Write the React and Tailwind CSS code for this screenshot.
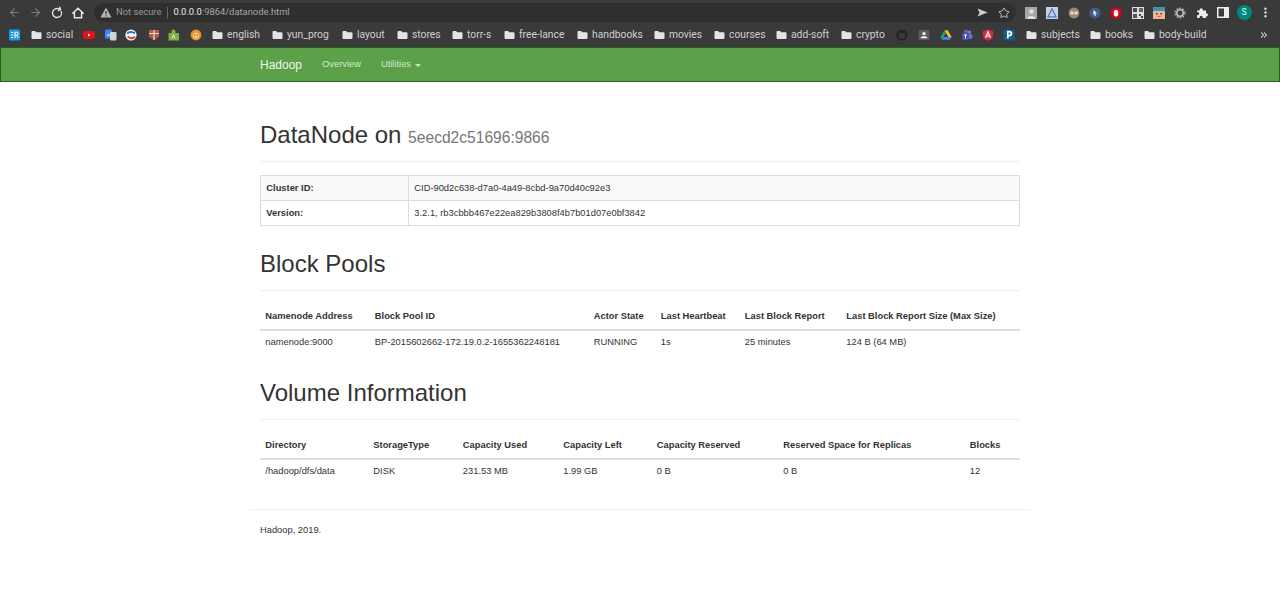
import React from "react";
import { ArrowLeft, ArrowRight, RotateCw, Star, EllipsisVertical, ChevronsRight } from "lucide-react";

const uiFont = "font-['Roboto','Noto_Sans',sans-serif]";

function Folder() {
  return (
    <svg width="11" height="10" viewBox="0 0 11 10" className="shrink-0">
      <path d="M0.5 2 a1 1 0 0 1 1-1 h2.6 l1.1 1.2 h4.3 a1 1 0 0 1 1 1 v4.8 a1 1 0 0 1-1 1 h-8 a1 1 0 0 1-1-1z" fill="#e4e4e4" />
    </svg>
  );
}

function Mark({ w = "w-[12px]", children }) {
  return (
    <svg viewBox="0 0 12 12" width="12" height="12" className={`shrink-0 ${w}`}>
      {children}
    </svg>
  );
}

function FolderLink({ label, className }) {
  return (
    <div className={`flex items-center gap-[4px] shrink-0 ${className}`}>
      <Folder />
      <span className="whitespace-nowrap">{label}</span>
    </div>
  );
}

function Bookmarks() {
  return (
    <div className={`h-[24px] bg-[#3a3a3a] flex items-center pl-[9px] text-[#cfcfcf] text-[10.3px] ${uiFont}`}>
      <Mark>
        <rect x="0" y="0.5" width="11" height="11" rx="1" fill="#1e9be8" />
        <path d="M2 3.5h2.4M2 6h2.4M2 8.5h2.4" stroke="#d7f0ff" strokeWidth="1" />
        <path d="M6 9V3.2h1.8a1.4 1.4 0 0 1 0 2.9H6m1.8 0L9.3 9" stroke="#fff" strokeWidth="1" fill="none" />
      </Mark>
      <FolderLink label="social" className="ml-[10px] w-[42px]" />
      <Mark w="ml-[10px]"><rect x="0" y="2" width="12" height="8" rx="2.4" fill="#e8101c" /><path d="M5 4.4v3.2L7.6 6z" fill="#fff" /></Mark>
      <Mark w="ml-[10px]"><rect x="0" y="0.5" width="7" height="9" rx="1" fill="#4285f4" /><rect x="5" y="3" width="6.5" height="8.5" rx="1" fill="#cfd4da" /><path d="M2 6h3" stroke="#fff" /></Mark>
      <Mark w="ml-[8px]"><circle cx="6" cy="6" r="5.6" fill="#f2f5f7" /><path d="M2 4.6 C4 2.4 8 2.6 10 4.4" stroke="#1e78c8" strokeWidth="1.8" fill="none" /><path d="M2.6 7.4 C5 9.6 8 9.6 10 7.6" stroke="#d9362b" strokeWidth="1.8" fill="none" /></Mark>
      <Mark w="ml-[11px]"><path d="M1 1h10v6.5L6 11.5 1 7.5z" fill="#b35a50" /><path d="M6 1v10M1 4.5h10" stroke="#ecd9c9" strokeWidth="1.2" /></Mark>
      <Mark w="ml-[8px]"><path d="M0.5 4h3V2.4a2 2 0 0 1 4 0V4h3.5v7.5H.5z" fill="#7cae4a" /><path d="M4 9.5 5.5 5.5 7 9.5" stroke="#e6f2d8" fill="none" /></Mark>
      <Mark w="ml-[10px]"><circle cx="6" cy="6" r="5.4" fill="#e98f2e" /><circle cx="6" cy="6.6" r="3.1" fill="#f4c77b" /><circle cx="4.8" cy="6" r="0.6" fill="#5a3312" /><circle cx="7.2" cy="6" r="0.6" fill="#5a3312" /></Mark>
      <FolderLink label="english" className="ml-[10px] w-[48px]" />
      <FolderLink label="yun_prog" className="ml-[12px] w-[58px]" />
      <FolderLink label="layout" className="ml-[12px] w-[44px]" />
      <FolderLink label="stores" className="ml-[11px] w-[44px]" />
      <FolderLink label="torr-s" className="ml-[11px] w-[41px]" />
      <FolderLink label="free-lance" className="ml-[11px] w-[61px]" />
      <FolderLink label="handbooks" className="ml-[12px] w-[66px]" />
      <FolderLink label="movies" className="ml-[11px] w-[48px]" />
      <FolderLink label="courses" className="ml-[12px] w-[50px]" />
      <FolderLink label="add-soft" className="ml-[12px] w-[54px]" />
      <FolderLink label="crypto" className="ml-[11px] w-[45px]" />
      <Mark w="ml-[10px]"><circle cx="6" cy="6" r="5.6" fill="#242424" /><path d="M3.2 9.4V6.8C2.6 5 3.2 3.6 3.8 3.4L5 4.2h2l1.2-.8c.6.2 1.2 1.6.6 3.4v2.6" fill="#3a3a3a" /></Mark>
      <Mark w="ml-[10px]"><rect x="0.5" y="1" width="11" height="10" rx="1" fill="#5b5b5b" /><circle cx="6" cy="4.6" r="1.7" fill="#f2f2f2" /><path d="M2.8 9.2h6.4V8L6 6.9 2.8 8z" fill="#f2f2f2" /></Mark>
      <Mark w="ml-[10px]"><path d="M4.4 1.2h3.2l4 6.8H8.4z" fill="#f6bf26" /><path d="M4.4 1.2.4 8l1.6 2.8L6 4z" fill="#1ea362" /><path d="M2 10.8h8L11.6 8H3.6z" fill="#4285f4" /></Mark>
      <Mark w="ml-[9px]"><circle cx="8.5" cy="3" r="1.6" fill="#7f86d8" /><rect x="6.5" y="4.8" width="5" height="5" rx="1.6" fill="#6a71c9" /><circle cx="5" cy="2.6" r="2" fill="#5b62c4" /><rect x="1" y="4" width="7" height="7" rx="1" fill="#4a50b0" /><path d="M3 6h3M4.5 6v3.4" stroke="#fff" /></Mark>
      <Mark w="ml-[9px]"><path d="M6 .4 11.4 2.4 10.5 9.4 6 11.8 1.5 9.4.6 2.4z" fill="#dd2c3f" /><path d="M3.6 8.8 6 2.8l2.4 6M4.4 7h3.2" stroke="#fff" strokeWidth="1.1" fill="none" /></Mark>
      <Mark w="ml-[9px]"><rect x="0.5" y="0.5" width="11" height="11" rx="1" fill="#0f5f8c" /><path d="M4.8 9.6V2.6h1.6a2 2 0 0 1 0 4H4.8" stroke="#fff" strokeWidth="1.7" fill="none" /></Mark>
      <FolderLink label="subjects" className="ml-[11px] w-[53px]" />
      <FolderLink label="books" className="ml-[11px] w-[43px]" />
      <FolderLink label="body-build" className="ml-[11px] w-[64px]" />
      <ChevronsRight size={10} strokeWidth={2.5} className="ml-[51px] text-[#d8d8d8]" />
    </div>
  );
}

function ExtSlot({ children }) {
  return <div className="w-[21.3px] h-[14px] flex items-center justify-center shrink-0">{children}</div>;
}

function Toolbar() {
  return (
    <div className="h-[23px] bg-[#3a3a3a] flex items-center pt-[2px]">
      <div className="flex items-center pl-[4px] w-[94px]">
        <div className="w-[21px] flex justify-center"><ArrowLeft size={13} className="text-[#7b7b7b]" /></div>
        <div className="w-[21px] flex justify-center"><ArrowRight size={13} className="text-[#7b7b7b]" /></div>
        <div className="w-[21px] flex justify-center"><RotateCw size={12} strokeWidth={2.6} className="text-[#e8e8e8] rotate-[-20deg]" /></div>
        <div className="w-[21px] flex justify-center">
          <svg width="12" height="12" viewBox="0 0 12 12"><path d="M6 1.2 11 6H9.6v4.8H2.4V6H1z" fill="none" stroke="#e8e8e8" strokeWidth="1.5" strokeLinejoin="miter" /></svg>
        </div>
      </div>
      <div className={`w-[922px] h-[19px] rounded-full bg-[#2f2f2f] flex items-center pl-[6px] pr-[2px] text-[9.4px] ${uiFont}`}>
        <svg width="12" height="11" viewBox="0 0 12 11" className="shrink-0">
          <path d="M6 .6 11.6 10.4H.4z" fill="#b4b4b4" />
          <path d="M6 4v3.2M6 8.2v1" stroke="#2f2f2f" strokeWidth="1.1" />
        </svg>
        <span className="ml-[4px] text-[#9a9a9a] whitespace-nowrap">Not secure</span>
        <span className="ml-[6px] w-px h-[12px] bg-[#666666]" />
        <span className="ml-[5px] whitespace-nowrap text-[#a6a6a6]"><span className="text-[#ececec]">0.0.0.0</span>:9864/datanode.html</span>
        <div className="ml-auto flex items-center">
          <div className="w-[21px] flex justify-center">
            <svg width="11" height="9" viewBox="0 0 11 9"><path d="M.5.5 10.5 4.5.5 8.5 2.5 4.5z" fill="#cfcfcf" /></svg>
          </div>
          <div className="w-[21px] flex justify-center"><Star size={12} strokeWidth={1.8} className="text-[#cfcfcf]" /></div>
        </div>
      </div>
      <div className="flex items-center pl-[4.5px]">
        <ExtSlot><svg width="12" height="12" viewBox="0 0 12 12"><rect width="12" height="12" fill="#a7a7a7" /><circle cx="6.5" cy="4.5" r="2.2" fill="#e2e2e2" /><path d="M2 12c.5-4 8-4 8.5 0z" fill="#e2e2e2" /></svg></ExtSlot>
        <ExtSlot><svg width="12" height="12" viewBox="0 0 12 12"><rect width="12" height="12" fill="#c6d0e2" /><path d="M6 2 10 9.8H2z" fill="none" stroke="#4a78c4" strokeWidth="1.3" /></svg></ExtSlot>
        <ExtSlot><svg width="12" height="12" viewBox="0 0 12 12"><circle cx="6" cy="6" r="5.4" fill="#a98669" /><circle cx="4" cy="6" r="1.8" fill="#d8dde0" /><circle cx="8" cy="6" r="1.8" fill="#d8dde0" /></svg></ExtSlot>
        <ExtSlot><svg width="12" height="12" viewBox="0 0 12 12"><circle cx="6" cy="6" r="5.6" fill="#3f5d85" /><path d="M4.8 3 8 6.4H6.2L7 8.8 5.8 9 5 6.8 4 7.8z" fill="#f2f2f2" /></svg></ExtSlot>
        <ExtSlot><svg width="12" height="12" viewBox="0 0 12 12"><circle cx="6" cy="6" r="5.8" fill="#d3061c" /><rect x="3.8" y="3" width="4.4" height="6.4" rx="1.8" fill="#fff" /></svg></ExtSlot>
        <ExtSlot><svg width="12" height="12" viewBox="0 0 12 12"><rect width="12" height="12" fill="#dcdcdc" /><rect x="1" y="1" width="4" height="4" fill="#4a4a4a" /><rect x="7" y="1" width="4" height="4" fill="#666" /><rect x="1" y="7" width="4" height="4" fill="#555" /><rect x="7" y="7" width="2" height="2" fill="#444" /><rect x="9" y="9" width="2" height="2" fill="#444" /></svg></ExtSlot>
        <ExtSlot><svg width="12" height="12" viewBox="0 0 12 12"><rect y="2" width="12" height="10" fill="#eeb58f" /><rect y="0" width="12" height="4" fill="#3e93b5" /><rect x="3" y="6" width="1.5" height="1.5" fill="#333" /><rect x="7.5" y="6" width="1.5" height="1.5" fill="#333" /><rect x="4.5" y="9" width="3" height="1" fill="#b56a52" /></svg></ExtSlot>
        <ExtSlot><svg width="12" height="12" viewBox="0 0 12 12"><circle cx="6" cy="6" r="3.4" fill="none" stroke="#b5b5b5" strokeWidth="2" /><circle cx="6" cy="6" r="5" fill="none" stroke="#b5b5b5" strokeWidth="1.2" strokeDasharray="1.6 1.6" /></svg></ExtSlot>
        <ExtSlot><svg width="12" height="12" viewBox="0 0 12 12"><path d="M1 3.6h2.6V2.8a1.6 1.6 0 0 1 3.2 0v.8H10v2.6h.4a1.6 1.6 0 0 1 0 3.2H10V11H6.8v-.6a1.6 1.6 0 0 0-3.2 0v.6H1V8.2h.6a1.6 1.6 0 0 0 0-3.2H1z" fill="#ededed" /></svg></ExtSlot>
        <ExtSlot><svg width="12" height="11" viewBox="0 0 12 11"><rect x="0.75" y="0.75" width="10.5" height="9.5" fill="none" stroke="#ededed" strokeWidth="1.5" /><rect x="7" y="1" width="4" height="9" fill="#ededed" /></svg></ExtSlot>
        <ExtSlot><div className={`w-[15px] h-[15px] shrink-0 rounded-full bg-[#00897b] text-[#dff] text-[8.5px] flex items-center justify-center ${uiFont}`}>S</div></ExtSlot>
        <ExtSlot><EllipsisVertical size={13} strokeWidth={2.5} className="text-[#e4e4e4]" /></ExtSlot>
      </div>
    </div>
  );
}

function NavBar() {
  return (
    <nav className="h-[35px] bg-[#5ca14a] border border-[#2a5c22] flex items-center pl-[259px] font-['Liberation_Sans',Arial,sans-serif] text-[#d5e8cd]">
      <span className="text-[12px] text-[#eef6ea]">Hadoop</span>
      <span className="ml-[20px] text-[9.33px]">Overview</span>
      <span className="ml-[20px] text-[9.33px]">Utilities</span>
      <span className="ml-[4px] mt-[1px] w-0 h-0 border-x-[3px] border-x-transparent border-t-[3px] border-t-[#d5e8cd]" />
    </nav>
  );
}

function Heading({ children, className = "" }) {
  return (
    <div className={`pb-[12.67px] border-b border-[#eeeeee] ${className}`}>
      <h1 className="text-[24px] leading-[26.4px] font-normal text-[#333333]">{children}</h1>
    </div>
  );
}

const th = "text-left font-bold text-[9.33px] leading-[13.33px] px-[5.33px] py-[5.33px] border-b-2 border-[#dddddd] text-[#333333]";
const td = "text-left text-[9.33px] leading-[13.33px] px-[5.33px] py-[5.33px] text-[#333333]";
const kth = "text-left text-[9.33px] leading-[13.33px] px-[5.33px] py-[5.33px] border border-[#dddddd]";
const ktd = "text-[9.33px] leading-[13.33px] px-[5.33px] py-[5.33px] border border-[#dddddd]";

export default function App() {
  return (
    <div className="min-h-[596px] bg-white flex flex-col">
      <Toolbar />
      <Bookmarks />
      <NavBar />
      <main className="w-[780px] mx-auto font-['Liberation_Sans',Arial,sans-serif] text-[#333333]">
        <div className="px-[10px]">
          <Heading className="mt-[40px]">
            DataNode on <small className="text-[15.6px] leading-none text-[#777777]">5eecd2c51696:9866</small>
          </Heading>
          <table className="mt-[13.33px] w-full table-fixed border-collapse border border-[#dddddd]">
            <colgroup>
              <col className="w-[148px]" />
              <col />
            </colgroup>
            <tbody>
              <tr className="bg-[#f9f9f9]">
                <th className={kth}>Cluster ID:</th>
                <td className={ktd}>CID-90d2c638-d7a0-4a49-8cbd-9a70d40c92e3</td>
              </tr>
              <tr>
                <th className={kth}>Version:</th>
                <td className={ktd}>3.2.1, rb3cbbb467e22ea829b3808f4b7b01d07e0bf3842</td>
              </tr>
            </tbody>
          </table>

          <Heading className="mt-[25px]">Block Pools</Heading>
          <table className="mt-[13.33px] w-full table-fixed border-collapse">
            <colgroup>
              <col className="w-[109.5px]" />
              <col className="w-[219px]" />
              <col className="w-[67px]" />
              <col className="w-[84px]" />
              <col className="w-[101.5px]" />
              <col />
            </colgroup>
            <thead>
              <tr>
                <th className={th}>Namenode Address</th>
                <th className={th}>Block Pool ID</th>
                <th className={th}>Actor State</th>
                <th className={th}>Last Heartbeat</th>
                <th className={th}>Last Block Report</th>
                <th className={th}>Last Block Report Size (Max Size)</th>
              </tr>
            </thead>
            <tbody>
              <tr>
                <td className={td}>namenode:9000</td>
                <td className={td}>BP-2015602662-172.19.0.2-1655362248181</td>
                <td className={td}>RUNNING</td>
                <td className={td}>1s</td>
                <td className={td}>25 minutes</td>
                <td className={td}>124 B (64 MB)</td>
              </tr>
            </tbody>
          </table>

          <Heading className="mt-[25px]">Volume Information</Heading>
          <table className="mt-[14px] w-full table-fixed border-collapse">
            <colgroup>
              <col className="w-[108px]" />
              <col className="w-[89.5px]" />
              <col className="w-[100.5px]" />
              <col className="w-[93.5px]" />
              <col className="w-[126.5px]" />
              <col className="w-[186.5px]" />
              <col />
            </colgroup>
            <thead>
              <tr>
                <th className={th}>Directory</th>
                <th className={th}>StorageType</th>
                <th className={th}>Capacity Used</th>
                <th className={th}>Capacity Left</th>
                <th className={th}>Capacity Reserved</th>
                <th className={th}>Reserved Space for Replicas</th>
                <th className={th}>Blocks</th>
              </tr>
            </thead>
            <tbody>
              <tr>
                <td className={td}>/hadoop/dfs/data</td>
                <td className={td}>DISK</td>
                <td className={td}>231.53 MB</td>
                <td className={td}>1.99 GB</td>
                <td className={td}>0 B</td>
                <td className={td}>0 B</td>
                <td className={td}>12</td>
              </tr>
            </tbody>
          </table>
        </div>
        <footer className="mt-[25.5px] border-t border-[#eeeeee] px-[10px] pt-[14px] text-[9.33px] leading-[13.33px]">
          Hadoop, 2019.
        </footer>
      </main>
    </div>
  );
}
